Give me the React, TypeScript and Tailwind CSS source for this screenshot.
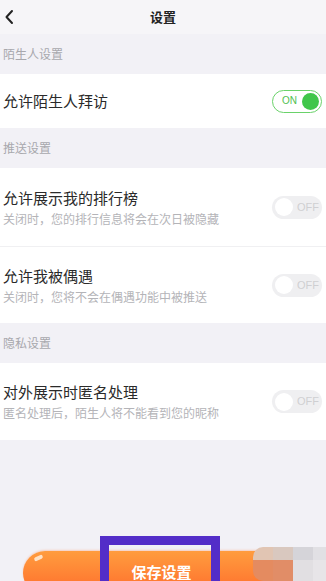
import React from 'react';

const FONT = { fontFamily: '"Noto Sans CJK SC", "Noto Sans", sans-serif' };

function Toggle({ on }: { on: boolean }) {
  if (on) {
    return (
      <div className="flex h-[23px] w-[50px] items-center justify-end gap-[5px] rounded-full border-[1.5px] border-[#6ad26a] bg-white pr-[2px]">
        <span className="text-[10px] leading-none text-[#4fc04f]" style={{ fontFamily: '"Liberation Sans", sans-serif' }}>ON</span>
        <span className="h-[17px] w-[17px] rounded-full bg-[#3fc64a]" />
      </div>
    );
  }
  return (
    <div className="flex h-[23px] w-[50px] items-center gap-[4px] rounded-full bg-[#efeff1] pl-[3px]">
      <span className="h-[18px] w-[18px] rounded-full bg-white" />
      <span className="text-[11px] leading-none text-[#cfcfd2]" style={{ fontFamily: '"Liberation Sans", sans-serif' }}>OFF</span>
    </div>
  );
}

function Section({ label }: { label: string }) {
  return (
    <div className="flex h-[40px] items-center px-[3px] text-[12px] text-[#a8a8ad]">{label}</div>
  );
}

function Row({ title, sub, on, h }: { title: string; sub?: string; on: boolean; h: string }) {
  return (
    <div className={`flex items-center justify-between bg-white pl-[3px] pr-[4px] ${h}`}>
      <div className="flex flex-col">
        <span className="text-[15px] leading-[20px] text-[#2a2a2a]">{title}</span>
        {sub && <span className="mt-[3px] text-[12px] leading-[16px] text-[#b4b4b8]">{sub}</span>}
      </div>
      <Toggle on={on} />
    </div>
  );
}

export default function App() {
  return (
    <div className="relative flex h-[581px] w-[326px] flex-col overflow-hidden bg-[#f2f1f6]" style={FONT}>
      {/* 顶部栏 */}
      <div className="relative flex h-[34px] items-center justify-center bg-[#f6f5f8]">
        <svg className="absolute left-[4px] top-[9px]" width="10" height="16" viewBox="0 0 10 16">
          <path d="M8 2 L2.5 8 L8 14" fill="none" stroke="#222" strokeWidth="2" strokeLinecap="round" strokeLinejoin="round" />
        </svg>
        <span className="text-[13px] font-semibold text-[#222]">设置</span>
      </div>

      <Section label="陌生人设置" />
      <Row title="允许陌生人拜访" on={true} h="h-[54px]" />

      <Section label="推送设置" />
      <Row title="允许展示我的排行榜" sub="关闭时，您的排行信息将会在次日被隐藏" on={false} h="h-[78px]" />
      <div className="h-px bg-[#f0f0f2]" />
      <Row title="允许我被偶遇" sub="关闭时，您将不会在偶遇功能中被推送" on={false} h="h-[76px]" />

      <Section label="隐私设置" />
      <Row title="对外展示时匿名处理" sub="匿名处理后，陌生人将不能看到您的昵称" on={false} h="h-[77px]" />

      {/* 保存按钮 */}
      <div className="mt-auto flex pl-[23px] pr-[26px]">
        <button className="relative flex h-[44px] w-full translate-y-[14px] items-start justify-center rounded-full bg-gradient-to-b from-[#ff9c3e] to-[#ff6b2c] pt-[10px] text-[15px] font-bold text-white shadow-[0_-1px_2px_rgba(255,120,60,0.3)]">
          <span className="absolute left-[11px] top-[5px] h-[4px] w-[9px] -rotate-[25deg] rounded-full bg-[#ffe1c4]" />
          保存设置
        </button>
      </div>

      {/* 标注框 */}
      <div className="absolute left-[100px] top-[536px] h-[60px] w-[120px] border-[9px] border-[#532dc8]" />

      {/* 马赛克 */}
      <div className="absolute left-[253px] top-[547px] grid grid-cols-[20px_20px_20px_13px] grid-rows-[13px_21px]">
        <div className="rounded-tl-[10px] bg-[#e1c5b3]" />
        <div className="bg-[#d9c8bf]" />
        <div className="bg-[#d5d4d9]" />
        <div className="bg-[#e1e0e4]" />
        <div className="rounded-bl-[10px] bg-[#e48b60]" />
        <div className="bg-[#e18d67]" />
        <div className="bg-[#e1dfe2]" />
        <div className="bg-[#e7e5e8]" />
      </div>
    </div>
  );
}
